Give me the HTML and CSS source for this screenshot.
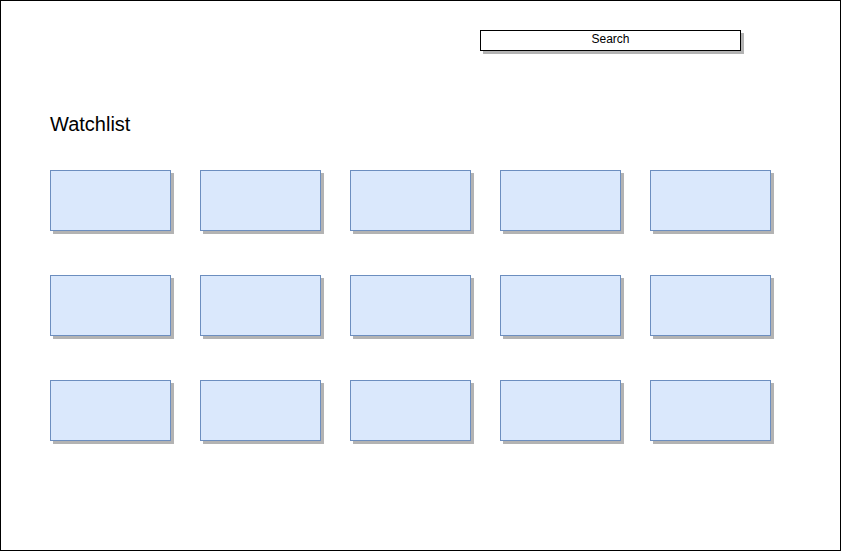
FILE: index.html
```html
<!DOCTYPE html>
<html>
<head>
<meta charset="utf-8">
<link rel="stylesheet" href="styles.css">
</head>
<body>
<div class="page">
  <div class="search">Search</div>
  <h1 class="title">Watchlist</h1>
  <div class="grid">
    <div class="card"></div><div class="card"></div><div class="card"></div><div class="card"></div><div class="card"></div>
    <div class="card"></div><div class="card"></div><div class="card"></div><div class="card"></div><div class="card"></div>
    <div class="card"></div><div class="card"></div><div class="card"></div><div class="card"></div><div class="card"></div>
  </div>
</div>
</body>
</html>
```

FILE: styles.css
```css
* { box-sizing: border-box; }
html, body { margin: 0; padding: 0; background: #fff; }
body { font-family: "Liberation Sans", Arial, sans-serif; color: #000; }
.page {
  width: 841px;
  height: 551px;
  border: 1px solid #000;
  padding: 29px 0 0 49px;
  overflow: hidden;
}
.search {
  margin-left: 430px;
  width: 261px;
  height: 21px;
  border: 1px solid #000;
  background: #fff;
  box-shadow: 3px 3px 0 #b3b3b3;
  font-size: 12px;
  line-height: 17px;
  text-align: center;
}
.title {
  margin: 62px 0 0 0;
  font-size: 20px;
  font-weight: normal;
  line-height: 23px;
  height: 23px;
}
.grid {
  margin-top: 34px;
  display: grid;
  grid-template-columns: repeat(5, 121px);
  grid-auto-rows: 61px;
  column-gap: 29px;
  row-gap: 44px;
}
.card {
  background: #dae8fc;
  border: 1px solid #6c8ebf;
  box-shadow: 3px 3px 0 #b3b3b3;
}
```
